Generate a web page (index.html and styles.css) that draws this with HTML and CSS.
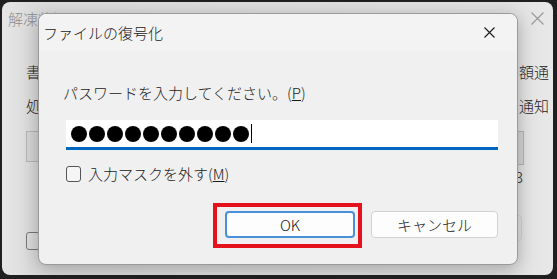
FILE: index.html
```html
<!DOCTYPE html>
<html lang="ja">
<head>
  <meta charset="UTF-8">
  <title>ファイルの復号化</title>
  <link rel="stylesheet" href="styles.css">
</head>
<body>

  <div class="back-window">
    <div class="back-title">
      <span>解凍状況</span>
      <svg class="back-close" width="13" height="13" viewBox="0 0 13 13">
        <path d="M0.5 0.5 L12.5 12.5 M12.5 0.5 L0.5 12.5" stroke="#9a9a9a" stroke-width="1.2" fill="none"/>
      </svg>
    </div>
    <div class="back-body">
      <div class="back-col left">
        <div class="back-text">書</div>
        <div class="back-text">処</div>
        <div class="back-box"></div>
        <div class="back-spacer"></div>
        <div class="back-check"></div>
      </div>
      <div class="back-col right">
        <div class="back-text">額通</div>
        <div class="back-text">通知</div>
        <div class="back-box small"></div>
        <div class="back-num">3</div>
        <div class="back-box btn"></div>
      </div>
    </div>

    <div class="dialog">
      <div class="dialog-title">
        <span>ファイルの復号化</span>
        <svg class="close" width="11" height="11" viewBox="0 0 11 11">
          <path d="M0.5 0.5 L10.5 10.5 M10.5 0.5 L0.5 10.5" stroke="#1a1a1a" stroke-width="1.1" fill="none"/>
        </svg>
      </div>
      <div class="dialog-body">
        <div class="label">パスワードを入力してください。(<u>P</u>)</div>
        <div class="password">
          <span class="dot"></span><span class="dot"></span><span class="dot"></span><span class="dot"></span><span class="dot"></span>
          <span class="dot"></span><span class="dot"></span><span class="dot"></span><span class="dot"></span><span class="dot"></span>
          <span class="caret"></span>
        </div>
        <label class="check-row">
          <span class="checkbox"></span>
          <span>入力マスクを外す(<u>M</u>)</span>
        </label>
        <div class="buttons">
          <div class="btn-wrap">
            <button class="btn default">OK</button>
            <span class="highlight"></span>
          </div>
          <button class="btn">キャンセル</button>
        </div>
      </div>
    </div>
  </div>

</body>
</html>
```

FILE: styles.css
```css
* {
  box-sizing: border-box;
  margin: 0;
  padding: 0;
}

body {
  width: 557px;
  height: 279px;
  overflow: hidden;
  background: #1f1f1f;
  font-family: "Noto Sans CJK JP", "Noto Sans", sans-serif;
  font-size: 15px;
  font-weight: 300;
  line-height: 20px;
  color: #1a1a1a;
  padding: 2px 0 0 2px;
}

.back-window {
  position: relative;
  width: 551px;
  height: 273px;
  border-radius: 8px;
  background: linear-gradient(90deg, #e6e6e6, #dcdcdc 5%, #e2e2e2 92%, #e8e8e8);
  overflow: hidden;
}

.back-title {
  display: flex;
  justify-content: space-between;
  align-items: center;
  height: 34px;
  padding: 0 9px 0 6px;
  color: #8d8d8d;
}

.back-close {
  margin-top: -2px;
}

.back-body {
  display: flex;
  justify-content: space-between;
  padding: 26px 4px 0 24px;
}

.back-col {
  display: flex;
  flex-direction: column;
  gap: 14px;
}

.back-col.right {
  align-items: flex-end;
}

.back-text {
  height: 20px;
  color: #222;
}

.back-box {
  width: 40px;
  height: 31px;
  border: 1px solid #b4b4b4;
  background: #d6d6d6;
  margin-top: 1px;
}

.back-box.small {
  width: 30px;
  height: 34px;
  margin-right: 25px;
  margin-bottom: -12px;
}

.back-num {
  margin-right: 26px;
  height: 20px;
}

.back-box.btn {
  width: 30px;
  height: 26px;
  margin-top: 14px;
  margin-right: 27px;
  border-radius: 4px;
  background: #e4e4e4;
}

.back-spacer {
  height: 58px;
}

.back-check {
  width: 14px;
  height: 18px;
  border: 1px solid #777;
  border-radius: 3px;
  margin-top: -16px;
}

.dialog {
  position: absolute;
  left: 36px;
  top: 11px;
  width: 480px;
  height: 252px;
  background: #f0f0f0;
  border: 1px solid #9a9a9a;
  border-radius: 8px;
  box-shadow: 0 4px 18px rgba(0, 0, 0, 0.28);
}

.dialog-title {
  display: flex;
  justify-content: space-between;
  align-items: center;
  height: 37px;
  padding: 0 22px 0 4px;
  background: #f3f3f3;
  border-radius: 8px 8px 0 0;
}

.dialog-body {
  padding: 32px 19px 0 24px;
}

.password {
  display: flex;
  align-items: center;
  height: 30px;
  margin: 17px 0 0 3px;
  padding-left: 5px;
  background: #fff;
  border-bottom: 3px solid #0067c0;
}

.dot {
  width: 16px;
  height: 16px;
  border-radius: 50%;
  background: #000;
  margin-right: 2px;
}

.caret {
  width: 1px;
  height: 19px;
  background: #000;
}

.check-row {
  display: flex;
  align-items: center;
  gap: 7px;
  height: 20px;
  margin: 14px 0 0 3px;
}

.checkbox {
  width: 15px;
  height: 16px;
  border: 1px solid #555;
  border-radius: 3px;
  background: #f5f5f5;
}

.buttons {
  display: flex;
  justify-content: flex-end;
  gap: 16px;
  margin-top: 27px;
}

.btn-wrap {
  position: relative;
}

.btn {
  display: block;
  width: 127px;
  height: 27px;
  font: inherit;
  color: #1a1a1a;
  background: #fdfdfd;
  border: 1px solid #d2d2d2;
  border-radius: 4px;
}

.btn.default {
  width: 130px;
  border: 2px solid #4a90d9;
}

.highlight {
  position: absolute;
  left: -12px;
  top: -8px;
  width: 149px;
  height: 45px;
  border: 4px solid #e5121d;
}
```
